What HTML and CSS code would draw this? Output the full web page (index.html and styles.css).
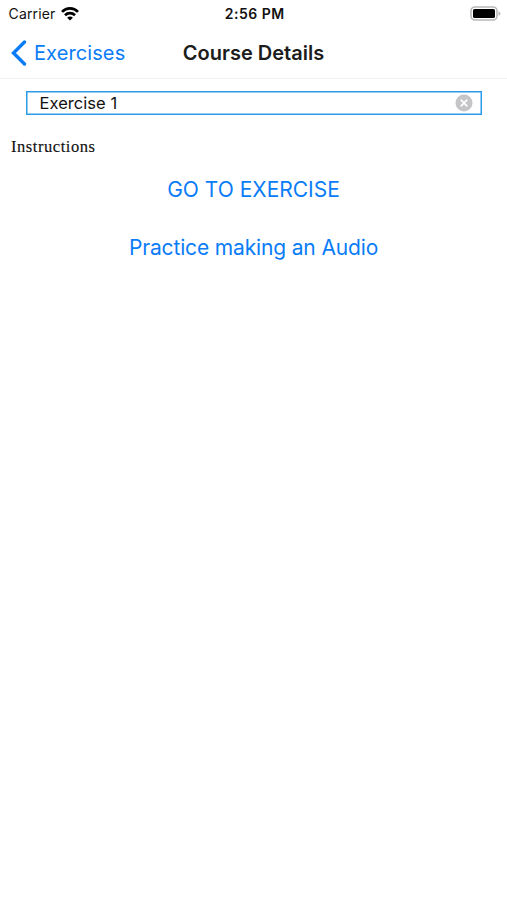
FILE: index.html
```html
<!DOCTYPE html>
<html lang="en">
<head>
    <meta charset="UTF-8">
    <meta name="viewport" content="width=device-width, initial-scale=1.0">
    <title>Course Details</title>
    <link rel="stylesheet" href="styles.css">
</head>
<body>

    <!-- Status Bar -->
    <div class="status-bar">
        <div class="carrier">
            <span class="carrier-name">Carrier</span>
            <svg class="wifi" width="18" height="14" viewBox="0 0 18 14" fill="none" stroke="#000" stroke-width="2.7">
                <path d="M1 4.900C5.500 .3 12.500 .3 17 4.900"/>
                <path d="M4 8.300C6.800 5.500 11.200 5.500 14 8.300"/>
                <path d="M9 13.600L6.100 10.700C7.700 9.200 10.300 9.200 11.900 10.700Z" fill="#000" stroke="none"/>
            </svg>
        </div>
        <span class="time">2:56 PM</span>
        <svg class="battery" width="31" height="15" viewBox="0 0 31 15">
            <rect x="1" y="1" width="26" height="13" rx="4" fill="none" stroke="#b8b8b8" stroke-width="1.600"/>
            <rect x="3" y="3" width="22" height="9" rx="1.500" fill="#000"/>
            <path d="M28.500 5.200C31 6 31 9 28.500 9.800Z" fill="#b8b8b8"/>
        </svg>
    </div>

    <!-- Navigation Bar -->
    <nav>
        <a class="back" href="#">
            <svg width="16" height="26" viewBox="0 0 16 26" fill="none" stroke="#0a7cf8" stroke-width="3.400" stroke-linecap="round">
                <path d="M13.500 2L2.500 13L13.500 24"/>
            </svg>
            <span>Exercises</span>
        </a>
        <h1>Course Details</h1>
    </nav>

    <!-- Exercise -->
    <main>
        <div class="field">
            <input type="text" value="Exercise 1" aria-label="Exercise name">
            <button class="clear" type="button" aria-label="Clear">
                <svg width="18" height="18" viewBox="0 0 18 18">
                    <circle cx="9" cy="9" r="8.500" fill="#c5c5c7"/>
                    <path d="M5.700 5.700L12.300 12.300M12.300 5.700L5.700 12.300" stroke="#fff" stroke-width="1.700"/>
                </svg>
            </button>
        </div>
        <p class="instructions">Instructions</p>
        <a class="link go" href="#">GO TO EXERCISE</a>
        <a class="link practice" href="#">Practice making an Audio</a>
    </main>

</body>
</html>
```
FILE: styles.css
```css
body {
    font-family: Inter, sans-serif;
    margin: 0;
    background-color: white;
    color: #111;
}
.status-bar {
    display: grid;
    grid-template-columns: 1fr auto 1fr;
    align-items: center;
    height: 27px;
    padding: 0 6px 0 8.5px;
}
.carrier {
    display: flex;
    align-items: center;
    gap: 6px;
}
.carrier-name {
    font-size: 14px;
    letter-spacing: 0.15px;
}
.time {
    font-size: 14px;
    font-weight: 600;
    letter-spacing: 0.5px;
}
.battery {
    justify-self: end;
}
nav {
    display: grid;
    grid-template-columns: 1fr auto 1fr;
    align-items: center;
    height: 52px;
    padding: 0 11px;
    border-bottom: 1px solid #f3f3f3;
    box-sizing: border-box;
}
.back {
    display: flex;
    align-items: center;
    gap: 7px;
    color: #0a7cf8;
    font-size: 20px;
    letter-spacing: 0.1px;
    text-decoration: none;
}
h1 {
    margin: 0;
    color: #1c1c1c;
    font-size: 20px;
    font-weight: 600;
}
main {
    display: flex;
    flex-direction: column;
    padding-top: 12px;
}
.field {
    display: flex;
    align-items: center;
    height: 24px;
    margin: 0 25px 0 26px;
    padding: 0 8px 0 12.5px;
    border: 1px solid #2b9bea;
    box-shadow: inset 0 0 0 0.5px #2b9bea;
    box-sizing: border-box;
}
.field input {
    flex: 1;
    min-width: 0;
    padding: 0;
    border: none;
    outline: none;
    background: none;
    color: #111;
    font: 16.5px Inter, sans-serif;
    letter-spacing: 0.05px;
}
.clear {
    display: flex;
    padding: 0;
    border: none;
    background: none;
}
.instructions {
    margin: 22px 11px 0;
    font-family: "Liberation Serif", serif;
    font-size: 16.5px;
    letter-spacing: 0.55px;
    line-height: 20px;
    -webkit-text-stroke: 0.15px #111;
}
.link {
    color: #0a7cf8;
    font-size: 21px;
    line-height: 26px;
    text-align: center;
    text-decoration: none;
}
.go {
    margin-top: 20px;
}
.practice {
    margin-top: 32px;
    letter-spacing: -0.15px;
}
```
